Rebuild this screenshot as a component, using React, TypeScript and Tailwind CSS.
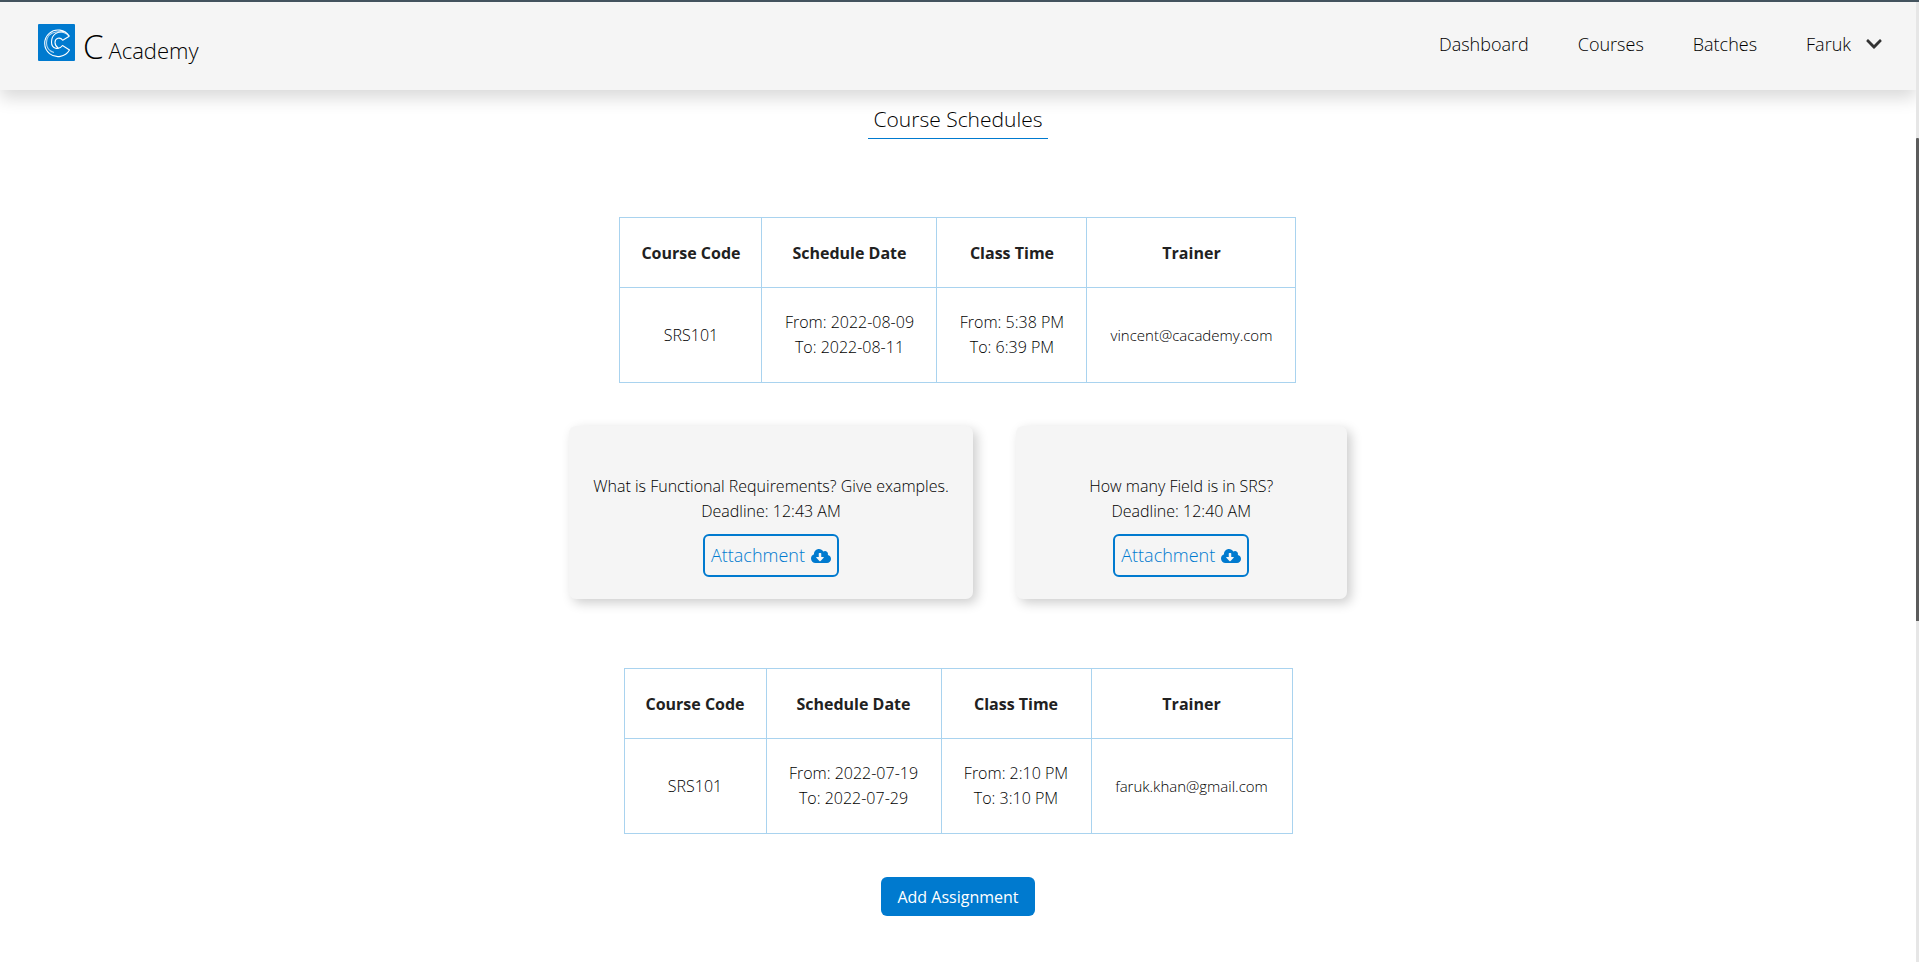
import React from "react";
import { FaChevronDown, FaCloudDownloadAlt } from "react-icons/fa";

type Schedule = {
  code: string;
  dates: [string, string];
  times: [string, string];
  trainer: string;
};

type Assignment = { question: string; deadline: string };

const first: Schedule = {
  code: "SRS101",
  dates: ["2022-08-09", "2022-08-11"],
  times: ["5:38 PM", "6:39 PM"],
  trainer: "vincent@cacademy.com",
};

const second: Schedule = {
  code: "SRS101",
  dates: ["2022-07-19", "2022-07-29"],
  times: ["2:10 PM", "3:10 PM"],
  trainer: "faruk.khan@gmail.com",
};

const assignments: Assignment[] = [
  { question: "What is Functional Requirements? Give examples.", deadline: "12:43 AM" },
  { question: "How many Field is in SRS?", deadline: "12:40 AM" },
];

function Logo() {
  return (
    <svg viewBox="0 0 37 37" className="size-[37px]" aria-hidden="true">
      <rect width="37" height="37" rx="1" fill="#007acf" />
      <g fill="none" stroke="#fff" strokeWidth="1.1" strokeLinejoin="round">
        <path d="M31.300 12.300 A13.300 13.300 0 1 0 31.500 26 L24.500 21.500 C21 26.500 13.500 25 13.500 18 C13.500 10 20 7 26.500 8" />
        <path d="M31.300 12.300 L24.700 16.200 C22 12.500 17 14 17 18.500 C17 21 18.500 23 20.500 24.500" />
        <path d="M31.300 12.300 C26 5.500 8.500 5.500 8.500 19 C8.500 23 11 27 16 28.500" strokeOpacity="0.7" />
      </g>
    </svg>
  );
}

function Header() {
  const link = "hover:text-[#007acf]";
  return (
    <header className="flex h-[88px] items-center justify-between bg-[#f5f5f5] pl-[38px] pr-[33px] shadow-[0_8px_16px_rgba(0,0,0,0.15)]">
      <a href="#home" className="flex items-start gap-2 pt-[2px]">
        <Logo />
        <span className="flex items-baseline gap-[5px] pt-[3px] leading-10">
          <span className="text-[33px]">C</span>
          <span className="text-[22px]">Academy</span>
        </span>
      </a>
      <nav className="flex items-center gap-[49px] pb-1 text-[18px] leading-6">
        <a href="#dashboard" className={link}>Dashboard</a>
        <a href="#courses" className={link}>Courses</a>
        <a href="#batches" className={link}>Batches</a>
        <button type="button" className="flex items-center gap-[14px]">
          Faruk
          <FaChevronDown className="size-[18px] text-[#333]" />
        </button>
      </nav>
    </header>
  );
}

function ScheduleTable({ item, trainerWidth }: { item: Schedule; trainerWidth: string }) {
  const cell = "border border-[#a9d3ef] px-0";
  return (
    <table className="border-collapse text-center text-[16px] leading-[25px]">
      <thead>
        <tr className="h-[70px] font-bold text-[#212121]">
          <th className={`${cell} w-[142px] pt-[2px]`}>Course Code</th>
          <th className={`${cell} w-[175px] pt-[2px]`}>Schedule Date</th>
          <th className={`${cell} w-[150px] pt-[2px]`}>Class Time</th>
          <th className={`${cell} ${trainerWidth} pt-[2px]`}>Trainer</th>
        </tr>
      </thead>
      <tbody>
        <tr className="h-[95px]">
          <td className={cell}>{item.code}</td>
          <td className={cell}>
            <p>From: {item.dates[0]}</p>
            <p>To: {item.dates[1]}</p>
          </td>
          <td className={cell}>
            <p>From: {item.times[0]}</p>
            <p>To: {item.times[1]}</p>
          </td>
          <td className={`${cell} text-[15px]`}>{item.trainer}</td>
        </tr>
      </tbody>
    </table>
  );
}

function AssignmentCard({ item }: { item: Assignment }) {
  return (
    <article className="flex min-w-[331px] flex-col items-center rounded-[7px] bg-[#f5f5f5] px-6 pt-12 pb-[22px] text-center text-[16px] leading-[25px] shadow-[4px_4px_12px_rgba(0,0,0,0.2)]">
      <p>{item.question}</p>
      <p>Deadline: {item.deadline}</p>
      <a
        href="#attachment"
        className="mt-[10px] flex h-[43px] items-center gap-[6px] rounded-[6px] border-2 border-[#007acf] px-[6px] text-[18px] text-[#007acf]"
      >
        Attachment
        <FaCloudDownloadAlt className="size-5" />
      </a>
    </article>
  );
}

export default function App() {
  return (
    <div className="flex min-h-screen border-t-2 border-[#455560] bg-white font-['Open_Sans','Noto_Sans',sans-serif] font-light text-black">
      <div className="flex flex-1 flex-col">
        <Header />
        <main className="flex flex-col items-center pb-10">
          <h1 className="border-b border-[#007acf] px-[5px] pt-[14px] pb-1 text-[21px] leading-[30px]">
            Course Schedules
          </h1>
          <section className="mt-[78px] flex flex-col items-center gap-[43px]">
            <ScheduleTable item={first} trainerWidth="w-[209px]" />
            <div className="flex gap-[43px]">
              {assignments.map((a) => (
                <AssignmentCard key={a.question} item={a} />
              ))}
            </div>
          </section>
          <section className="mt-[69px] flex flex-col items-center gap-[43px]">
            <ScheduleTable item={second} trainerWidth="w-[201px]" />
            <button
              type="button"
              className="h-[39px] rounded-[6px] bg-[#007acf] px-4 text-[16px] font-normal text-white"
            >
              Add Assignment
            </button>
          </section>
        </main>
      </div>
      <div className="w-[3px] bg-[#e6e6e6]" aria-hidden="true">
        <div className="mt-[136px] h-[483px] rounded-t-[1px] bg-[#5c5c5c]" />
      </div>
    </div>
  );
}
